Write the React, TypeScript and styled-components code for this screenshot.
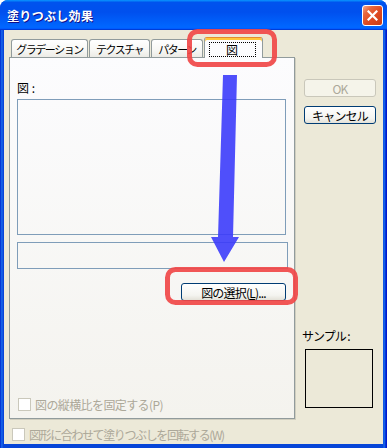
import React from 'react';
import styled, { createGlobalStyle } from 'styled-components';

const GlobalStyle = createGlobalStyle`
  html, body {
    margin: 0;
    padding: 0;
    background: #ffffff;
  }
  body {
    font-family: "Noto Sans CJK JP", "Noto Sans", sans-serif;
    font-size: 11px;
    color: #000000;
  }
  * {
    box-sizing: border-box;
  }
`;

const SWindow = styled.div`
  position: relative;
  width: 387px;
  height: 448px;
  display: flex;
  flex-direction: column;
  background: linear-gradient(90deg, #0019cf 0, #0855dd 1px, #1f6bf0 2px, #0645d8 3px, #0645d8 383px, #1f6bf0 384px, #0855dd 385px, #0019cf 386px);
  border-radius: 8px 8px 0 0;
  overflow: hidden;
`;

const STitleBar = styled.div`
  flex: none;
  height: 30px;
  display: flex;
  align-items: center;
  justify-content: space-between;
  padding: 0 4px 0 7px;
  background: linear-gradient(180deg, #0997ff, #0053ee 8%, #0050ee 40%, #0066ff 88%, #0066ff 93%, #005bff 95%, #003dd7 96%, #003dd7);
`;

const STitle = styled.span`
  color: #ffffff;
  font-weight: 700;
  font-size: 12px;
  letter-spacing: 0.3px;
  text-shadow: 1px 1px #0f1089;
`;

const SCloseButton = styled.div`
  width: 21px;
  height: 21px;
  margin-top: 1px;
  border: 1px solid #ffffff;
  border-radius: 3px;
  display: flex;
  align-items: center;
  justify-content: center;
  background: linear-gradient(135deg, #f5a88c 0, #e5683f 25%, #e04a22 55%, #c63d17 100%);
`;

const SBody = styled.div`
  flex: 1;
  margin: 0 4px 4px;
  padding: 7px 0 0 5px;
  background: #ece9d8;
  display: grid;
  grid-template-columns: 286px 72px;
  column-gap: 9px;
  align-items: start;
`;

const SLeftColumn = styled.div`
  display: flex;
  flex-direction: column;
`;

const STabRow = styled.div`
  display: flex;
  align-items: flex-end;
  height: 20px;
  padding-left: 2px;
`;

interface TabProps {
  $width: number;
  $active?: boolean;
}

const STab = styled.div<TabProps>`
  width: ${(p) => p.$width}px;
  height: ${(p) => (p.$active ? 21 : 18)}px;
  margin-right: ${(p) => (p.$active ? 0 : 1)}px;
  margin-bottom: ${(p) => (p.$active ? -1 : 0)}px;
  position: relative;
  z-index: ${(p) => (p.$active ? 1 : 0)};
  display: flex;
  align-items: center;
  justify-content: center;
  border: 1px solid #919b9c;
  border-bottom: none;
  border-top-color: ${(p) => (p.$active ? '#e68b2c' : '#919b9c')};
  border-radius: 3px 3px 0 0;
  background: ${(p) =>
    p.$active ? '#fcfcfe' : 'linear-gradient(180deg, #ffffff 0%, #f7f7f4 60%, #ecebe6 100%)'};
  box-shadow: ${(p) => (p.$active ? 'inset 0 2px #ffc83c' : 'none')};
  letter-spacing: -1.5px;
  white-space: nowrap;
  padding-top: ${(p) => (p.$active ? 2 : 0)}px;
`;

const SFocusRing = styled.span`
  width: 47px;
  height: 15px;
  border: 1px dotted #000000;
  display: flex;
  align-items: center;
  justify-content: center;
  margin-left: -3px;
  font-size: 12px;
  letter-spacing: 0;
`;

const SPanel = styled.div`
  height: 362px;
  border: 1px solid #919b9c;
  background: linear-gradient(180deg, #fcfcfe 0%, #f4f3ee 100%);
  box-shadow: 1px 1px 0 #d0cebf;
  display: flex;
  flex-direction: column;
  padding: 0 0 7px 7px;
`;

const SFieldLabel = styled.div`
  margin-top: 23px;
  height: 13px;
  line-height: 13px;
  font-size: 12px;
`;

interface FrameProps {
  $width: number;
  $height: number;
  $gap: number;
}

const SFrame = styled.div<FrameProps>`
  width: ${(p) => p.$width}px;
  height: ${(p) => p.$height}px;
  margin-top: ${(p) => p.$gap}px;
  border: 1px solid #7f9db9;
`;

const SButtonRow = styled.div`
  width: 269px;
  margin-top: 14px;
  display: flex;
  justify-content: flex-end;
`;

interface ButtonProps {
  $width: number;
  $disabled?: boolean;
  $gap?: number;
}

const SButton = styled.div<ButtonProps>`
  width: ${(p) => p.$width}px;
  height: 18px;
  margin-top: ${(p) => p.$gap ?? 0}px;
  display: flex;
  align-items: center;
  justify-content: center;
  border: 1px solid ${(p) => (p.$disabled ? '#c9c7ba' : '#003c74')};
  border-radius: 3px;
  background: ${(p) =>
    p.$disabled ? '#f5f4ea' : 'linear-gradient(180deg, #ffffff 0%, #f4f4f0 70%, #e3e1d8 100%)'};
  color: ${(p) => (p.$disabled ? '#aca899' : '#000000')};
  font-size: 12px;
  letter-spacing: -0.8px;
  white-space: nowrap;

  u {
    text-decoration: underline;
  }
`;

interface CheckRowProps {
  $left: number;
  $top?: number;
  $spacing: number;
}

const SCheckRow = styled.div<CheckRowProps>`
  display: flex;
  align-items: center;
  gap: 4px;
  height: 13px;
  margin-left: ${(p) => p.$left}px;
  margin-top: ${(p) => (p.$top === undefined ? 'auto' : `${p.$top}px`)};
  color: #aca899;
  font-size: 12px;
  letter-spacing: ${(p) => p.$spacing}px;
  white-space: nowrap;
`;

const SCheckBox = styled.span`
  flex: none;
  width: 13px;
  height: 13px;
  border: 1px solid #cac8bb;
  background: #ffffff;
`;

const SRightColumn = styled.div`
  display: flex;
  flex-direction: column;
  padding-top: 42px;
`;

const SSampleLabel = styled.div`
  margin-top: 205px;
  margin-left: -2px;
  height: 13px;
  line-height: 13px;
  font-size: 12px;
  letter-spacing: -1px;
  white-space: pre;
`;

const SSampleBox = styled.div`
  width: 68px;
  height: 59px;
  margin-top: 7px;
  margin-left: 1px;
  border: 1px solid #000000;
`;

const SOverlay = styled.svg`
  position: absolute;
  left: 0;
  top: 0;
  pointer-events: none;
`;

const CloseIcon: React.FC = () => (
  <svg width="11" height="11" viewBox="0 0 11 11">
    <path d="M1.5 1.5 L9.5 9.5 M9.5 1.5 L1.5 9.5" stroke="#ffffff" strokeWidth="2.2" strokeLinecap="square" />
  </svg>
);

const Annotations: React.FC = () => (
  <SOverlay width={387} height={448} viewBox="0 0 387 448">
    <polygon
      points="223,75 237,75 233,237 239,237 224,262 211,237 218,237"
      fill="#3c3cfb"
      fillOpacity={0.9}
    />
    <rect x={189.5} y={31.5} width={85} height={33} rx={8} fill="none" stroke="#f04848" strokeOpacity={0.92} strokeWidth={5} />
    <rect x={167.5} y={269.5} width={128} height={33} rx={8} fill="none" stroke="#f04848" strokeOpacity={0.92} strokeWidth={5} />
  </SOverlay>
);

const tabs = [
  { label: 'グラデーション', width: 77 },
  { label: 'テクスチャ', width: 61 },
  { label: 'パターン', width: 52 },
];

const App: React.FC = () => {
  return (
    <>
      <GlobalStyle />
      <SWindow>
        <STitleBar>
          <STitle>塗りつぶし効果</STitle>
          <SCloseButton>
            <CloseIcon />
          </SCloseButton>
        </STitleBar>
        <SBody>
          <SLeftColumn>
            <STabRow>
              {tabs.map((t) => (
                <STab key={t.label} $width={t.width}>
                  {t.label}
                </STab>
              ))}
              <STab $width={59} $active>
                <SFocusRing>図</SFocusRing>
              </STab>
            </STabRow>
            <SPanel>
              <SFieldLabel>図 :</SFieldLabel>
              <SFrame $width={269} $height={136} $gap={5} />
              <SFrame $width={271} $height={27} $gap={7} />
              <SButtonRow>
                <SButton $width={105}>
                  図の選択(<u>L</u>)...
                </SButton>
              </SButtonRow>
              <SCheckRow $left={1} $spacing={-0.6}>
                <SCheckBox />
                図の縦横比を固定する(P)
              </SCheckRow>
            </SPanel>
            <SCheckRow $left={3} $top={9} $spacing={-1.4}>
              <SCheckBox />
              図形に合わせて塗りつぶしを回転する(W)
            </SCheckRow>
          </SLeftColumn>
          <SRightColumn>
            <SButton $width={72} $disabled>
              OK
            </SButton>
            <SButton $width={72} $gap={9}>
              キャンセル
            </SButton>
            <SSampleLabel>サンプル :</SSampleLabel>
            <SSampleBox />
          </SRightColumn>
        </SBody>
        <Annotations />
      </SWindow>
    </>
  );
};

export default App;
